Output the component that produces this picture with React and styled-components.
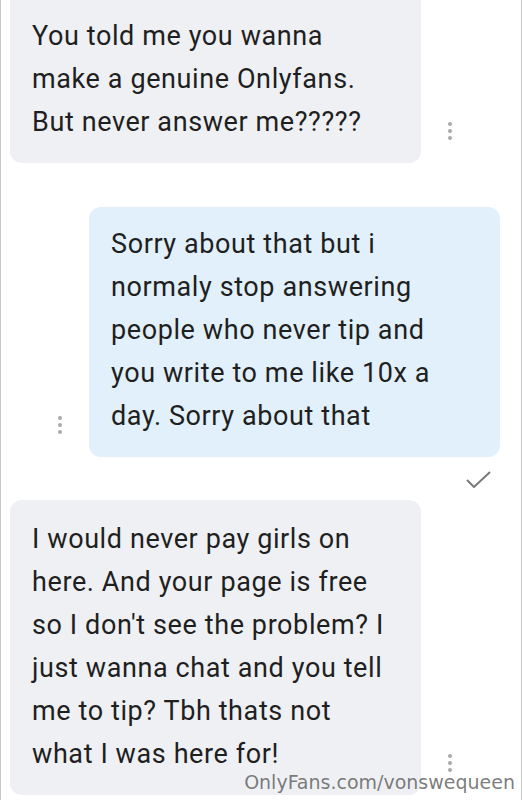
import React from "react";
import styled, { createGlobalStyle } from "styled-components";

const GlobalStyles = createGlobalStyle`
  html, body { margin: 0; padding: 0; background: #fff; }
  body { font-family: Roboto, "Noto Sans", Arial, sans-serif; }
`;

const Page = styled.div`
  position: relative;
  box-sizing: border-box;
  width: 522px;
  height: 800px;
  overflow: hidden;
  border-left: 1px solid #c9c9c9;
  border-right: 1px solid #c9c9c9;
`;

const Thread = styled.div`
  display: flex;
  flex-direction: column;
`;

const Row = styled.div`
  display: flex;
  align-items: flex-end;
  justify-content: ${(p) => (p.$out ? "flex-end" : "flex-start")};
  padding: ${(p) => (p.$out ? "0 21px 0 0" : "0 0 0 9px")};
  margin-top: ${(p) => p.$gap || 0}px;
`;

const Bubble = styled.div`
  box-sizing: border-box;
  width: 411px;
  padding: ${(p) => p.$pt}px 18px ${(p) => p.$pb}px 22px;
  background: ${(p) => (p.$out ? "#e1f0fa" : "#eef0f3")};
  border-radius: ${(p) => (p.$cut ? "0 0 12px 12px" : "12px")};
  color: #1f1f1f;
  font-size: 27px;
  letter-spacing: 0.6px;
  line-height: 43px;
  white-space: nowrap;
`;

const Menu = styled.div`
  display: flex;
  flex-direction: column;
  gap: 3px;
  margin: ${(p) => (p.$out ? "0 27px 23px 0" : "0 0 23px 27px")};
  span {
    width: 4px;
    height: 4px;
    border-radius: 50%;
    background: #a9a9a9;
  }
`;

const Status = styled.div`
  display: flex;
  justify-content: flex-end;
  padding-right: 30px;
  margin-top: 14px;
  height: 16px;
`;

const Watermark = styled.div`
  position: absolute;
  right: 6px;
  bottom: 7px;
  font-family: "DejaVu Sans", Verdana, sans-serif;
  font-size: 19px;
  color: rgba(90, 90, 90, 0.8);
`;

const messages = [
  {
    out: false,
    cut: true,
    gap: 0,
    pt: 15,
    pb: 19,
    lines: ["You told me you wanna", "make a genuine Onlyfans.", "But never answer me?????"],
  },
  {
    out: true,
    gap: 44,
    pt: 16,
    pb: 19,
    lines: [
      "Sorry about that but i",
      "normaly stop answering",
      "people who never tip and",
      "you write to me like 10x a",
      "day. Sorry about that",
    ],
    read: true,
  },
  {
    out: false,
    gap: 13,
    pt: 18,
    pb: 19,
    lines: [
      "I would never pay girls on",
      "here. And your page is free",
      "so I don't see the problem? I",
      "just wanna chat and you tell",
      "me to tip? Tbh thats not",
      "what I was here for!",
    ],
  },
];

function Dots({ out }) {
  return (
    <Menu $out={out}>
      <span />
      <span />
      <span />
    </Menu>
  );
}

function Check() {
  return (
    <svg width="25" height="17" viewBox="0 0 25 17">
      <path d="M1 9 L8 16 L24 1" fill="none" stroke="#7a7a7a" strokeWidth="2" />
    </svg>
  );
}

export default function App() {
  return (
    <>
      <GlobalStyles />
      <Page>
        <Thread>
          {messages.map((m, i) => (
            <React.Fragment key={i}>
              <Row $out={m.out} $gap={m.gap}>
                {m.out && <Dots out />}
                <Bubble $out={m.out} $cut={m.cut} $pt={m.pt} $pb={m.pb}>
                  {m.lines.map((l, j) => (
                    <div key={j}>{l}</div>
                  ))}
                </Bubble>
                {!m.out && <Dots />}
              </Row>
              {m.read && (
                <Status>
                  <Check />
                </Status>
              )}
            </React.Fragment>
          ))}
        </Thread>
        <Watermark>OnlyFans.com/vonswequeen</Watermark>
      </Page>
    </>
  );
}
